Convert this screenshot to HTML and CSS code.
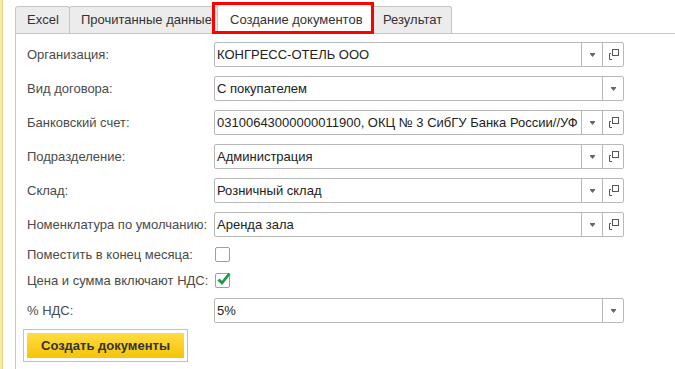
FILE: index.html
```html
<!DOCTYPE html>
<html lang="ru">
<head>
    <meta charset="UTF-8">
    <meta name="viewport" content="width=device-width, initial-scale=1.0">
    <title>Загрузка документов</title>
    <link rel="stylesheet" href="styles.css">
</head>
<body>
    <div class="page">
        <div class="strip"></div>
        <div class="main">
            <div class="tabs">
                <div class="tab t-excel">Excel</div>
                <div class="tab t-read">Прочитанные данные</div>
                <div class="tab t-create active">Создание документов</div>
                <div class="tab t-result">Результат</div>
            </div>

            <div class="panel">
                <div class="form">
                    <div class="label">Организация:</div>
                    <div class="field">
                        <div class="value">КОНГРЕСС-ОТЕЛЬ ООО</div>
                        <div class="btn"><svg width="5" height="4" viewBox="0 0 5 4"><path d="M0 0H5V1L2.5 4L0 1Z" fill="#666"/></svg></div>
                        <div class="btn"><svg width="11" height="11" viewBox="0 0 11 11"><rect x="4.5" y="0.5" width="6" height="6" fill="none" stroke="#555"/><path d="M3 4.5H1.5V10.5H4" fill="none" stroke="#555"/></svg></div>
                    </div>

                    <div class="label">Вид договора:</div>
                    <div class="field">
                        <div class="value">С покупателем</div>
                        <div class="btn"><svg width="5" height="4" viewBox="0 0 5 4"><path d="M0 0H5V1L2.5 4L0 1Z" fill="#666"/></svg></div>
                    </div>

                    <div class="label">Банковский счет:</div>
                    <div class="field">
                        <div class="value">03100643000000011900, ОКЦ № 3 СибГУ Банка России//УФ</div>
                        <div class="btn"><svg width="5" height="4" viewBox="0 0 5 4"><path d="M0 0H5V1L2.5 4L0 1Z" fill="#666"/></svg></div>
                        <div class="btn"><svg width="11" height="11" viewBox="0 0 11 11"><rect x="4.5" y="0.5" width="6" height="6" fill="none" stroke="#555"/><path d="M3 4.5H1.5V10.5H4" fill="none" stroke="#555"/></svg></div>
                    </div>

                    <div class="label">Подразделение:</div>
                    <div class="field">
                        <div class="value">Администрация</div>
                        <div class="btn"><svg width="5" height="4" viewBox="0 0 5 4"><path d="M0 0H5V1L2.5 4L0 1Z" fill="#666"/></svg></div>
                        <div class="btn"><svg width="11" height="11" viewBox="0 0 11 11"><rect x="4.5" y="0.5" width="6" height="6" fill="none" stroke="#555"/><path d="M3 4.5H1.5V10.5H4" fill="none" stroke="#555"/></svg></div>
                    </div>

                    <div class="label">Склад:</div>
                    <div class="field">
                        <div class="value">Розничный склад</div>
                        <div class="btn"><svg width="5" height="4" viewBox="0 0 5 4"><path d="M0 0H5V1L2.5 4L0 1Z" fill="#666"/></svg></div>
                        <div class="btn"><svg width="11" height="11" viewBox="0 0 11 11"><rect x="4.5" y="0.5" width="6" height="6" fill="none" stroke="#555"/><path d="M3 4.5H1.5V10.5H4" fill="none" stroke="#555"/></svg></div>
                    </div>

                    <div class="label">Номенклатура по умолчанию:</div>
                    <div class="field">
                        <div class="value">Аренда зала</div>
                        <div class="btn"><svg width="5" height="4" viewBox="0 0 5 4"><path d="M0 0H5V1L2.5 4L0 1Z" fill="#666"/></svg></div>
                        <div class="btn"><svg width="11" height="11" viewBox="0 0 11 11"><rect x="4.5" y="0.5" width="6" height="6" fill="none" stroke="#555"/><path d="M3 4.5H1.5V10.5H4" fill="none" stroke="#555"/></svg></div>
                    </div>

                    <div class="label">Поместить в конец месяца:</div>
                    <div class="check-cell"><div class="checkbox"></div></div>

                    <div class="label">Цена и сумма включают НДС:</div>
                    <div class="check-cell">
                        <div class="checkbox">
                            <svg class="tick" width="16" height="16" viewBox="0 0 16 16"><path d="M2.5 8.5L6 12L13.5 2.5" fill="none" stroke="#1b9a4a" stroke-width="2.8"/></svg>
                        </div>
                    </div>

                    <div class="label">% НДС:</div>
                    <div class="field">
                        <div class="value">5%</div>
                        <div class="btn"><svg width="5" height="4" viewBox="0 0 5 4"><path d="M0 0H5V1L2.5 4L0 1Z" fill="#666"/></svg></div>
                    </div>
                </div>

                <div class="action">
                    <button class="create">Создать документы</button>
                </div>
            </div>
        </div>
    </div>
</body>
</html>
```

FILE: styles.css
```css
html, body {
    margin: 0;
    height: 100%;
    background: #fff;
}
body {
    font-family: "Liberation Sans", Arial, sans-serif;
    font-size: 13px;
    color: #4a4a4a;
}
.page {
    display: flex;
    height: 369px;
    width: 675px;
    overflow: hidden;
}
.strip {
    width: 2px;
    background: #f8eaa4;
    border-right: 1px solid #e6d487;
}
.main {
    flex: 1;
    display: flex;
    flex-direction: column;
    margin-left: 12px;
}

/* tabs */
.tabs {
    display: flex;
    align-items: flex-end;
    height: 34px;
    box-sizing: border-box;
    border-bottom: 1px solid #c6c6c6;
}
.tab {
    flex: none;
    height: 27px;
    box-sizing: border-box;
    padding-left: 11px;
    line-height: 26px;
    background: #ececec;
    border: 1px solid #c6c6c6;
    border-bottom: none;
    border-radius: 3px 3px 0 0;
    margin-right: -1px;
    color: #333;
    white-space: nowrap;
}
.t-excel { width: 55px; }
.t-read { width: 149px; }
.t-create { width: 155px; }
.t-result { width: 81px; }
.tab.active {
    position: relative;
    height: 30px;
    margin-bottom: -1px;
    background: #fff;
    padding-left: 12px;
    line-height: 30px;
    z-index: 1;
}
.tab.active::after {
    content: "";
    position: absolute;
    left: -6px;
    right: -3px;
    top: -3px;
    bottom: 0;
    border: 3px solid #f00;
}

/* panel */
.panel {
    flex: 1;
    border-left: 1px solid #c6c6c6;
    padding: 8px 0 0 11px;
}
.form {
    display: grid;
    grid-template-columns: 187px 410px;
    grid-template-rows: repeat(6, 25px) 17px 17px 25px;
    row-gap: 9px;
    align-items: center;
}
.label {
    white-space: nowrap;
}
.field {
    display: flex;
    height: 25px;
    box-sizing: border-box;
    border: 1px solid #b8b8b8;
    border-radius: 2px;
    background: #fff;
    overflow: hidden;
}
.value {
    flex: 1;
    padding-left: 2px;
    line-height: 23px;
    color: #222;
    white-space: nowrap;
    overflow: hidden;
}
.btn {
    width: 20px;
    flex: none;
    border-left: 1px solid #b8b8b8;
    display: flex;
    align-items: center;
    justify-content: center;
}
.check-cell {
    display: flex;
    align-items: center;
}
.checkbox {
    position: relative;
    width: 15px;
    height: 15px;
    margin-left: 1px;
    box-sizing: border-box;
    border: 1px solid #a0a0a0;
    border-radius: 2px;
}
.tick {
    position: absolute;
    left: 0;
    top: -3px;
}

/* button */
.action {
    margin: 6px 0 0 -4px;
}
.create {
    display: inline-block;
    margin: 0;
    box-sizing: border-box;
    width: 165px;
    height: 33px;
    padding: 3px;
    border: 1px solid #f0c82e;
    background-color: #fff;
    background-image: linear-gradient(#ffe04a, #f5c000);
    background-clip: content-box;
    box-shadow: inset 0 0 0 3px #fff;
    font: inherit;
    font-weight: bold;
    color: #333;
}
```
